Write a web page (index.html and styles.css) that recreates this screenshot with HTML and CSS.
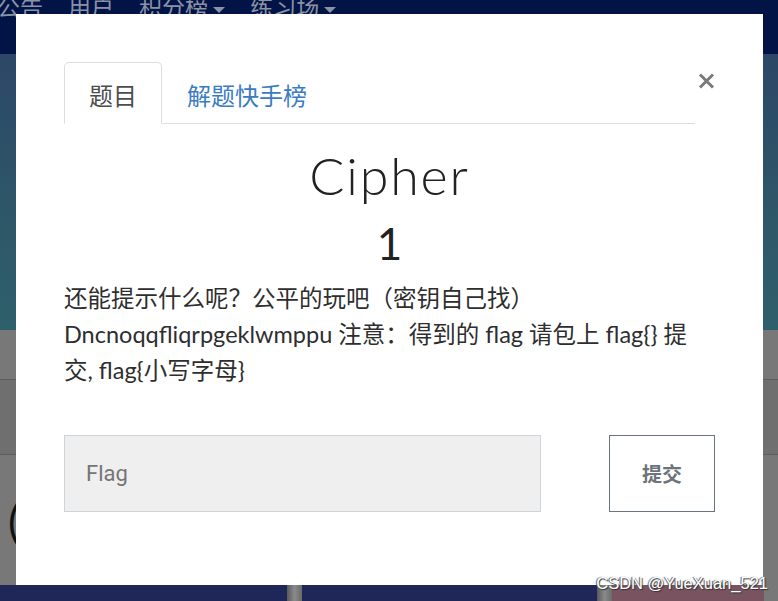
FILE: index.html
```html
<!DOCTYPE html>
<html lang="zh-CN">
<head>
    <meta charset="UTF-8">
    <meta name="viewport" content="width=device-width, initial-scale=1.0">
    <title>Cipher</title>
    <link rel="stylesheet" href="styles.css">
</head>
<body>
    <div class="page">
        <header class="topnav">
            <span>公告</span>
            <span>用户</span>
            <span>积分榜 <i class="caret"></i></span>
            <span>练习场 <i class="caret"></i></span>
        </header>
        <section class="hero"></section>
        <section class="band"></section>
        <section class="band dark"></section>
        <section class="band tall"><span class="paren">(</span></section>
        <footer class="bars">
            <div class="bar blue first"></div>
            <div class="bar gap"></div>
            <div class="bar blue second"></div>
            <div class="bar gap"></div>
            <div class="bar rose"></div>
            <div class="bar tail"></div>
        </footer>
    </div>

    <div class="modal">
        <div class="modal-head">
            <ul class="tabs">
                <li class="tab active">题目</li>
                <li class="tab">解题快手榜</li>
            </ul>
            <button class="close" aria-label="Close">
                <svg width="17" height="16" viewBox="0 0 17 16">
                    <path d="M2 1.5 L15 14.5 M15 1.5 L2 14.5" stroke="#7a7a7a" stroke-width="3" fill="none"/>
                </svg>
            </button>
        </div>

        <h2 class="title">Cipher</h2>
        <h3 class="points">1</h3>
        <p class="desc">还能提示什么呢？公平的玩吧（密钥自己找）Dncnoqqfliqrpgeklwmppu 注意：得到的 flag 请包上 flag{} 提交, flag{小写字母}</p>

        <form class="answer" onsubmit="return false;">
            <input type="text" class="flag-input" placeholder="Flag">
            <button type="submit" class="submit">提交</button>
        </form>
    </div>

    <div class="watermark">CSDN @YueXuan_521</div>
</body>
</html>
```

FILE: styles.css
```css
* {
    box-sizing: border-box;
}
body {
    margin: 0;
    width: 778px;
    height: 601px;
    overflow: hidden;
    position: relative;
    background: #777;
    font-family: Lato, "Noto Sans CJK SC", sans-serif;
}
.page {
    display: flex;
    flex-direction: column;
    height: 601px;
}
.topnav {
    height: 54px;
    flex: none;
    background: #011445;
    display: flex;
    gap: 25px;
    padding-left: 0;
    color: #8a92a6;
    font-family: "Noto Sans CJK SC", sans-serif;
    font-size: 23px;
    line-height: 23px;
    overflow: hidden;
}
.topnav span {
    margin-top: -5px;
    white-space: nowrap;
}
.topnav span:first-child {
    margin-left: -3px;
}
.caret {
    display: inline-block;
    width: 0;
    height: 0;
    border-left: 6px solid transparent;
    border-right: 6px solid transparent;
    border-top: 6px solid #8a92a6;
    vertical-align: middle;
}
.hero {
    height: 276px;
    flex: none;
    background: linear-gradient(180deg, #2c4767 0%, #2e5668 55%, #2f5f6b 100%);
}
.band {
    height: 50px;
    flex: none;
    background: #787878;
    border-bottom: 1px solid #5e5e5e;
}
.band.dark {
    height: 75px;
    background: #6f6f6f;
}
.band.tall {
    flex: 1;
    height: auto;
    border-bottom: none;
    padding: 44px 0 0 8px;
}
.paren {
    font-size: 44px;
    line-height: 1;
    color: #111;
}
.bars {
    height: 16px;
    flex: none;
    display: flex;
}
.bar.blue {
    background: #1e2757;
}
.bar.first {
    width: 287px;
}
.bar.second {
    width: 295px;
}
.bar.gap {
    width: 15px;
    background: linear-gradient(90deg, #5a5a5a, #8a8a8a 50%, #6a6a6a);
}
.bar.rose {
    width: 152px;
    background: #7a5361;
}
.bar.tail {
    flex: 1;
    background: #787878;
}

.modal {
    position: absolute;
    left: 16px;
    top: 14px;
    width: 747px;
    height: 571px;
    background: #fff;
    padding: 48px 48px 0;
}
.modal-head {
    display: flex;
    align-items: flex-start;
}
.tabs {
    flex: 1;
    display: flex;
    list-style: none;
    margin: 0;
    padding: 0;
    border-bottom: 1px solid #ddd;
}
.tab {
    margin-right: 2px;
    margin-bottom: -1px;
    padding: 16px 24px 12px;
    line-height: 32px;
    font-size: 24px;
    font-family: "Noto Sans CJK SC", sans-serif;
    color: #3a7cc4;
    border: 1px solid transparent;
    border-radius: 5px 5px 0 0;
}
.tab:first-child + .tab {
    padding-left: 22px;
}
.tab.active {
    color: #4d4d4d;
    background: #fff;
    border-color: #ddd;
    border-bottom-color: #fff;
}
.close {
    margin: 11px 0 0 2px;
    padding: 0;
    width: 18px;
    height: 16px;
    border: none;
    background: none;
    line-height: 0;
}
.title {
    margin: 20px 0 0;
    text-align: center;
    font-size: 52px;
    line-height: 1.2;
    font-weight: 300;
    letter-spacing: 1.8px;
    color: #222;
}
.points {
    margin: 11px 0 0;
    text-align: center;
    font-size: 44px;
    line-height: 1.2;
    font-weight: 400;
    color: #222;
}
.desc {
    margin: 10px 0 0;
    font-size: 23.5px;
    line-height: 36px;
    color: #2e2e2e;
}
.answer {
    display: flex;
    justify-content: space-between;
    margin-top: 47px;
}
.flag-input {
    width: 477px;
    height: 77px;
    padding: 0 21px;
    background: #efefef;
    border: 1px solid #cfd4da;
    font-family: Roboto, sans-serif;
    font-size: 22px;
    color: #333;
}
.flag-input::placeholder {
    color: #757575;
}
.submit {
    width: 106px;
    height: 77px;
    background: #fff;
    border: 1px solid #6c757d;
    font-family: "Noto Sans CJK SC", sans-serif;
    font-weight: bold;
    font-size: 20px;
    color: #6c737a;
}
.watermark {
    position: absolute;
    right: 10px;
    bottom: 8px;
    font-family: "Liberation Sans", Arial, sans-serif;
    font-size: 16.5px;
    color: #fff;
    text-shadow: 1px 1px 1px #333, -1px 0 1px #555;
}
```
